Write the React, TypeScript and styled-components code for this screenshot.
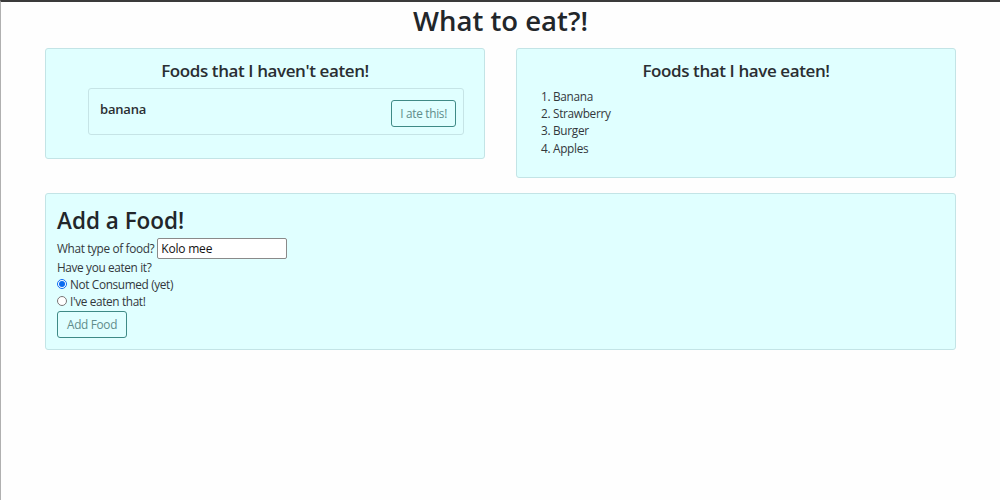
import React from "react";
import styled, { createGlobalStyle } from "styled-components";

const Global = createGlobalStyle`
  html, body { margin: 0; padding: 0; background: #fefefe; }
  body { font-family: "Open Sans", "Noto Sans", sans-serif; color: #212529; }
  * { box-sizing: border-box; }
`;

const Page = styled.div`
  width: 1000px;
  height: 500px;
  border-top: 2px solid #3a3a3a;
  border-left: 1px solid #b0b0b0;
  overflow: hidden;
`;

const Title = styled.h1`
  margin: 0;
  height: 46px;
  padding-top: 1px;
  text-align: center;
  font-size: 27.5px;
  font-weight: 600;
  letter-spacing: 0;
  line-height: 36px;
  color: #22262a;
`;

const Container = styled.div`
  padding: 0 44px 0 44px;
  display: flex;
  flex-direction: column;
  gap: 15px;
`;

const Row = styled.div`
  display: grid;
  grid-template-columns: 1fr 1fr;
  column-gap: 31px;
  align-items: start;
`;

const Card = styled.section<{ $pad?: string }>`
  background: #e0ffff;
  border: 1px solid #c3e4e6;
  border-radius: 3px;
  padding: ${(p) => p.$pad || "10px 12px 22px"};
`;

const CardTitle = styled.h4`
  margin: 0 0 5px;
  text-align: center;
  font-size: 17px;
  font-weight: 600;
  letter-spacing: -0.4px;
  line-height: 24px;
  color: #2a2e32;
`;

const ItemCard = styled.div`
  margin: 0 8px 0 30px;
  height: 47px;
  border: 1px solid #c6e4e6;
  border-radius: 3px;
  display: flex;
  justify-content: space-between;
  align-items: flex-start;
  padding: 10px 7px 0 11px;
`;

const ItemName = styled.span`
  font-size: 13px;
  font-weight: 600;
  letter-spacing: -0.2px;
  line-height: 20px;
  color: #2b2f33;
`;

const OutlineButton = styled.button<{ $px?: number }>`
  font-family: inherit;
  background: transparent;
  border: 1px solid #3f8a86;
  border-radius: 3px;
  color: #5f8c8a;
  font-size: 11.8px;
  letter-spacing: -0.3px;
  line-height: 25px;
  height: 27px;
  padding: 0 ${(p) => p.$px ?? 9}px;
  cursor: pointer;
`;

const SmallButton = styled(OutlineButton)`
  margin-top: 1px;
  align-self: flex-start;
`;

const List = styled.ol`
  margin: 2px 0 0;
  list-style-position: inside;
  padding-left: 12px;
  font-size: 11.8px;
  letter-spacing: -0.3px;
  line-height: 17.2px;
  color: #33383c;
`;

const FormTitle = styled.h2`
  margin: 0 0 2px;
  font-size: 22.5px;
  font-weight: 600;
  letter-spacing: 0;
  line-height: 30px;
  color: #22262a;
`;

const Line = styled.div`
  display: flex;
  align-items: center;
  font-size: 11.8px;
  letter-spacing: -0.35px;
  line-height: 17px;
  color: #33383c;
`;

const InputLine = styled(Line)`
  gap: 3px;
`;

const TextInput = styled.input`
  width: 130px;
  height: 21px;
  font-family: inherit;
  font-size: 12px;
  letter-spacing: -0.2px;
  padding: 0 3px;
  border: 1px solid #8a8a8a;
  border-radius: 2px;
  background: #fff;
  color: #111;
`;

const Radio = styled.input`
  width: 10px;
  height: 10px;
  margin: 0 3px 0 0;
  accent-color: #0a6cf0;
`;

const SubmitButton = styled(OutlineButton)`
  margin-top: 1px;
`;

export default function App() {
  return (
    <Page>
      <Global />
      <Title>What to eat?!</Title>
      <Container>
        <Row>
          <Card $pad="10px 12px 23px">
            <CardTitle>Foods that I haven't eaten!</CardTitle>
            <ItemCard>
              <ItemName>banana</ItemName>
              <SmallButton $px={8}>I ate this!</SmallButton>
            </ItemCard>
          </Card>
          <Card $pad="10px 12px 20px">
            <CardTitle>Foods that I have eaten!</CardTitle>
            <List>
              <li>Banana</li>
              <li>Strawberry</li>
              <li>Burger</li>
              <li>Apples</li>
            </List>
          </Card>
        </Row>
        <Card $pad="12px 11px 11px">
          <FormTitle>Add a Food!</FormTitle>
          <InputLine>
            <span>What type of food?</span>
            <TextInput defaultValue="Kolo mee" />
          </InputLine>
          <Line>Have you eaten it?</Line>
          <Line>
            <Radio type="radio" name="eaten" defaultChecked />
            <span>Not Consumed (yet)</span>
          </Line>
          <Line>
            <Radio type="radio" name="eaten" />
            <span>I've eaten that!</span>
          </Line>
          <SubmitButton $px={9}>Add Food</SubmitButton>
        </Card>
      </Container>
    </Page>
  );
}
